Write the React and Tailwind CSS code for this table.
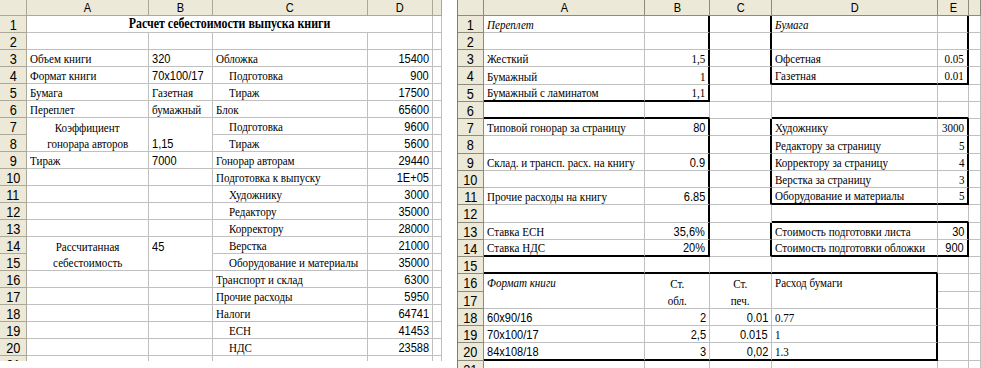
import React from 'react';

// Two Excel sheets shown side by side: book cost calculation + reference tables

const HDR = 'bg-[#ece9d8]';
const SERIF = "font-['Liberation_Serif','Times_New_Roman',serif]";
const SANS = "font-['Liberation_Sans',Arial,sans-serif]";

function Txt({ t, a, f, b, it, ind }) {
    const origin = a === 'r' ? 'origin-right' : a === 'c' ? 'origin-center' : 'origin-left';
    const font = f === 's' ? SANS : SERIF;
    const size = b ? 'text-[14px] font-bold' : 'text-[13px]';
    return (
        <span className={`inline-block whitespace-nowrap leading-none text-black scale-x-[0.85] ${origin} ${font} ${size} ${it ? 'italic' : ''} ${ind ? 'ml-[13px]' : ''}`}>
            {t}
        </span>
    );
}

function Cell({ c }) {
    const span = `${c.cs === 4 ? 'col-span-4' : ''} ${c.rs === 2 ? 'row-span-2' : ''}`;
    const br = c.r ? 'border-r-2 border-r-black' : 'border-r border-r-[#c0c0c0]';
    const bb = c.bb ? 'border-b-2 border-b-black' : 'border-b border-b-[#c0c0c0]';
    const justify = c.a === 'r' ? 'justify-end' : c.a === 'c' ? 'justify-center' : 'justify-start';

    if (c.lines) {
        return (
            <div className={`${span} ${br} ${bb} bg-white flex flex-col px-[3px]`}>
                {c.lines.map((l, i) => (
                    <div key={i} className={`flex-1 flex ${justify} ${c.top && i === 0 ? 'items-start pt-[2px]' : 'items-end pb-[1px]'}`}>
                        {l && <Txt t={l} a={c.a} f={c.f} it={c.it} />}
                    </div>
                ))}
            </div>
        );
    }

    return (
        <div className={`${span} ${br} ${bb} bg-white flex items-end ${justify} px-[3px] pb-[1px]`}>
            {c.t && <Txt {...c} />}
        </div>
    );
}

function Sheet({ gridCls, wrapCls, lineCls, letters, rows }) {
    const hdrCell = `${HDR} border-r border-b ${lineCls} flex items-center justify-center`;
    return (
        <div className={`overflow-hidden ${wrapCls}`}>
            <div className={`grid ${gridCls}`}>
                <div className={hdrCell} />
                {letters.map((l, i) => (
                    <div key={i} className={hdrCell}>
                        <span className={`inline-block scale-x-[0.85] leading-none text-[13px] text-black ${SANS}`}>{l}</span>
                    </div>
                ))}
                {rows.map((row, ri) => (
                    <React.Fragment key={ri}>
                        <div className={hdrCell}>
                            <span className={`inline-block scale-x-[0.85] leading-none text-[15px] text-black ${SANS}`}>{ri + 1}</span>
                        </div>
                        {row.map((c, ci) => <Cell key={ci} c={c} />)}
                    </React.Fragment>
                ))}
            </div>
        </div>
    );
}

const n = (t) => ({ t, a: 'r', f: 's' });

const LEFT = [
    [{ t: 'Расчет себестоимости выпуска книги', cs: 4, a: 'c', b: true }, {}],
    [{}, {}, {}, {}, {}],
    [{ t: 'Объем книги' }, { t: '320', f: 's' }, { t: 'Обложка' }, n('15400'), {}],
    [{ t: 'Формат книги' }, { t: '70x100/17', f: 's' }, { t: 'Подготовка', ind: true }, n('900'), {}],
    [{ t: 'Бумага' }, { t: 'Газетная' }, { t: 'Тираж', ind: true }, n('17500'), {}],
    [{ t: 'Переплет' }, { t: 'бумажный' }, { t: 'Блок' }, n('65600'), {}],
    [{ lines: ['Коэффициент', 'гонорара авторов'], rs: 2, a: 'c' }, { lines: ['', '1,15'], rs: 2, f: 's' }, { t: 'Подготовка', ind: true }, n('9600'), {}],
    [{ t: 'Тираж', ind: true }, n('5600'), {}],
    [{ t: 'Тираж' }, { t: '7000', f: 's' }, { t: 'Гонорар авторам' }, n('29440'), {}],
    [{}, {}, { t: 'Подготовка к выпуску' }, n('1E+05'), {}],
    [{}, {}, { t: 'Художнику', ind: true }, n('3000'), {}],
    [{}, {}, { t: 'Редактору', ind: true }, n('35000'), {}],
    [{}, {}, { t: 'Корректору', ind: true }, n('28000'), {}],
    [{ lines: ['Рассчитанная', 'себестоимость'], rs: 2, a: 'c' }, { lines: ['45', ''], rs: 2, f: 's' }, { t: 'Верстка', ind: true }, n('21000'), {}],
    [{ t: 'Оборудование и материалы', ind: true }, n('35000'), {}],
    [{}, {}, { t: 'Транспорт и склад' }, n('6300'), {}],
    [{}, {}, { t: 'Прочие расходы' }, n('5950'), {}],
    [{}, {}, { t: 'Налоги' }, n('64741'), {}],
    [{}, {}, { t: 'ЕСН', ind: true }, n('41453'), {}],
    [{}, {}, { t: 'НДС', ind: true }, n('23588'), {}],
    [{}, {}, {}, {}, {}],
];

const RIGHT = [
    [{ t: 'Переплет', it: true }, { r: 1 }, { r: 1 }, { t: 'Бумага', it: true }, { r: 1 }, {}],
    [{}, { r: 1 }, { r: 1 }, {}, { r: 1 }, {}],
    [{ t: 'Жесткий' }, { t: '1,5', a: 'r', r: 1 }, { r: 1 }, { t: 'Офсетная' }, { t: '0.05', a: 'r', r: 1 }, {}],
    [{ t: 'Бумажный' }, { t: '1', a: 'r', r: 1 }, { r: 1 }, { t: 'Газетная', bb: 1 }, { t: '0.01', a: 'r', r: 1, bb: 1 }, {}],
    [{ t: 'Бумажный с ламинатом', bb: 1 }, { t: '1,1', a: 'r', r: 1, bb: 1 }, {}, {}, {}, {}],
    [{ bb: 1 }, { bb: 1 }, {}, { bb: 1 }, { bb: 1 }, {}],
    [{ t: 'Типовой гонорар за страницу' }, { ...n('80'), r: 1 }, { r: 1 }, { t: 'Художнику' }, { t: '3000', a: 'r', r: 1 }, {}],
    [{}, { r: 1 }, { r: 1 }, { t: 'Редактору за страницу' }, { t: '5', a: 'r', r: 1 }, {}],
    [{ t: 'Склад. и трансп. расх. на книгу' }, { ...n('0.9'), r: 1 }, { r: 1 }, { t: 'Корректору за страницу' }, { t: '4', a: 'r', r: 1 }, {}],
    [{}, { r: 1 }, { r: 1 }, { t: 'Верстка за страницу' }, { t: '3', a: 'r', r: 1 }, {}],
    [{ t: 'Прочие расходы на книгу' }, { ...n('6.85'), r: 1 }, { r: 1 }, { t: 'Оборудование и материалы', bb: 1 }, { t: '5', a: 'r', r: 1, bb: 1 }, {}],
    [{}, { r: 1 }, {}, { bb: 1 }, { bb: 1 }, {}],
    [{ t: 'Ставка ЕСН' }, { ...n('35,6%'), r: 1 }, { r: 1 }, { t: 'Стоимость подготовки листа' }, { ...n('30'), r: 1 }, {}],
    [{ t: 'Ставка НДС', bb: 1 }, { ...n('20%'), r: 1, bb: 1 }, { r: 1 }, { t: 'Стоимость подготовки обложки', bb: 1 }, { ...n('900'), r: 1, bb: 1 }, {}],
    [{ bb: 1 }, { bb: 1 }, { bb: 1 }, { bb: 1 }, {}, {}],
    [
        { lines: ['Формат книги', ''], it: true, rs: 2, top: true },
        { lines: ['Ст.', 'обл.'], a: 'c', rs: 2 },
        { lines: ['Ст.', 'печ.'], a: 'c', rs: 2 },
        { lines: ['Расход бумаги', ''], rs: 2, r: 1, top: true },
        {},
        {},
    ],
    [{}, {}],
    [{ t: '60x90/16', f: 's' }, n('2'), n('0.01'), { t: '0.77', r: 1 }, {}, {}],
    [{ t: '70x100/17', f: 's' }, n('2,5'), n('0.015'), { t: '1', r: 1 }, {}, {}],
    [{ t: '84x108/18', f: 's', bb: 1 }, { ...n('3'), bb: 1 }, { ...n('0,02'), bb: 1 }, { t: '1.3', r: 1, bb: 1 }, {}, {}],
    [{}, {}, {}, {}, {}, {}],
];

export default function App() {
    return (
        <div className="flex w-[981px] h-[368px] overflow-hidden bg-white">
            <Sheet
                wrapCls="w-[442px] h-[361px] shrink-0"
                gridCls="grid-cols-[27px_122px_64px_155px_65px_9px] grid-rows-[16px_repeat(21,17px)]"
                lineCls="border-[#aca899]"
                letters={['A', 'B', 'C', 'D', '']}
                rows={LEFT}
            />
            <Sheet
                wrapCls="ml-[15px] w-[524px] h-[368px] shrink-0 border-l border-[#7f7d72]"
                gridCls="grid-cols-[26px_161px_65px_62px_166px_31px_12px] grid-rows-[16px_17px_17px_17px_18px_17px_17px_17px_18px_17px_17px_17px_18px_17px_17px_17px_18px_17px_17px_17px_18px_17px]"
                lineCls="border-[#8e8b7d]"
                letters={['A', 'B', 'C', 'D', 'E', '']}
                rows={RIGHT}
            />
        </div>
    );
}
